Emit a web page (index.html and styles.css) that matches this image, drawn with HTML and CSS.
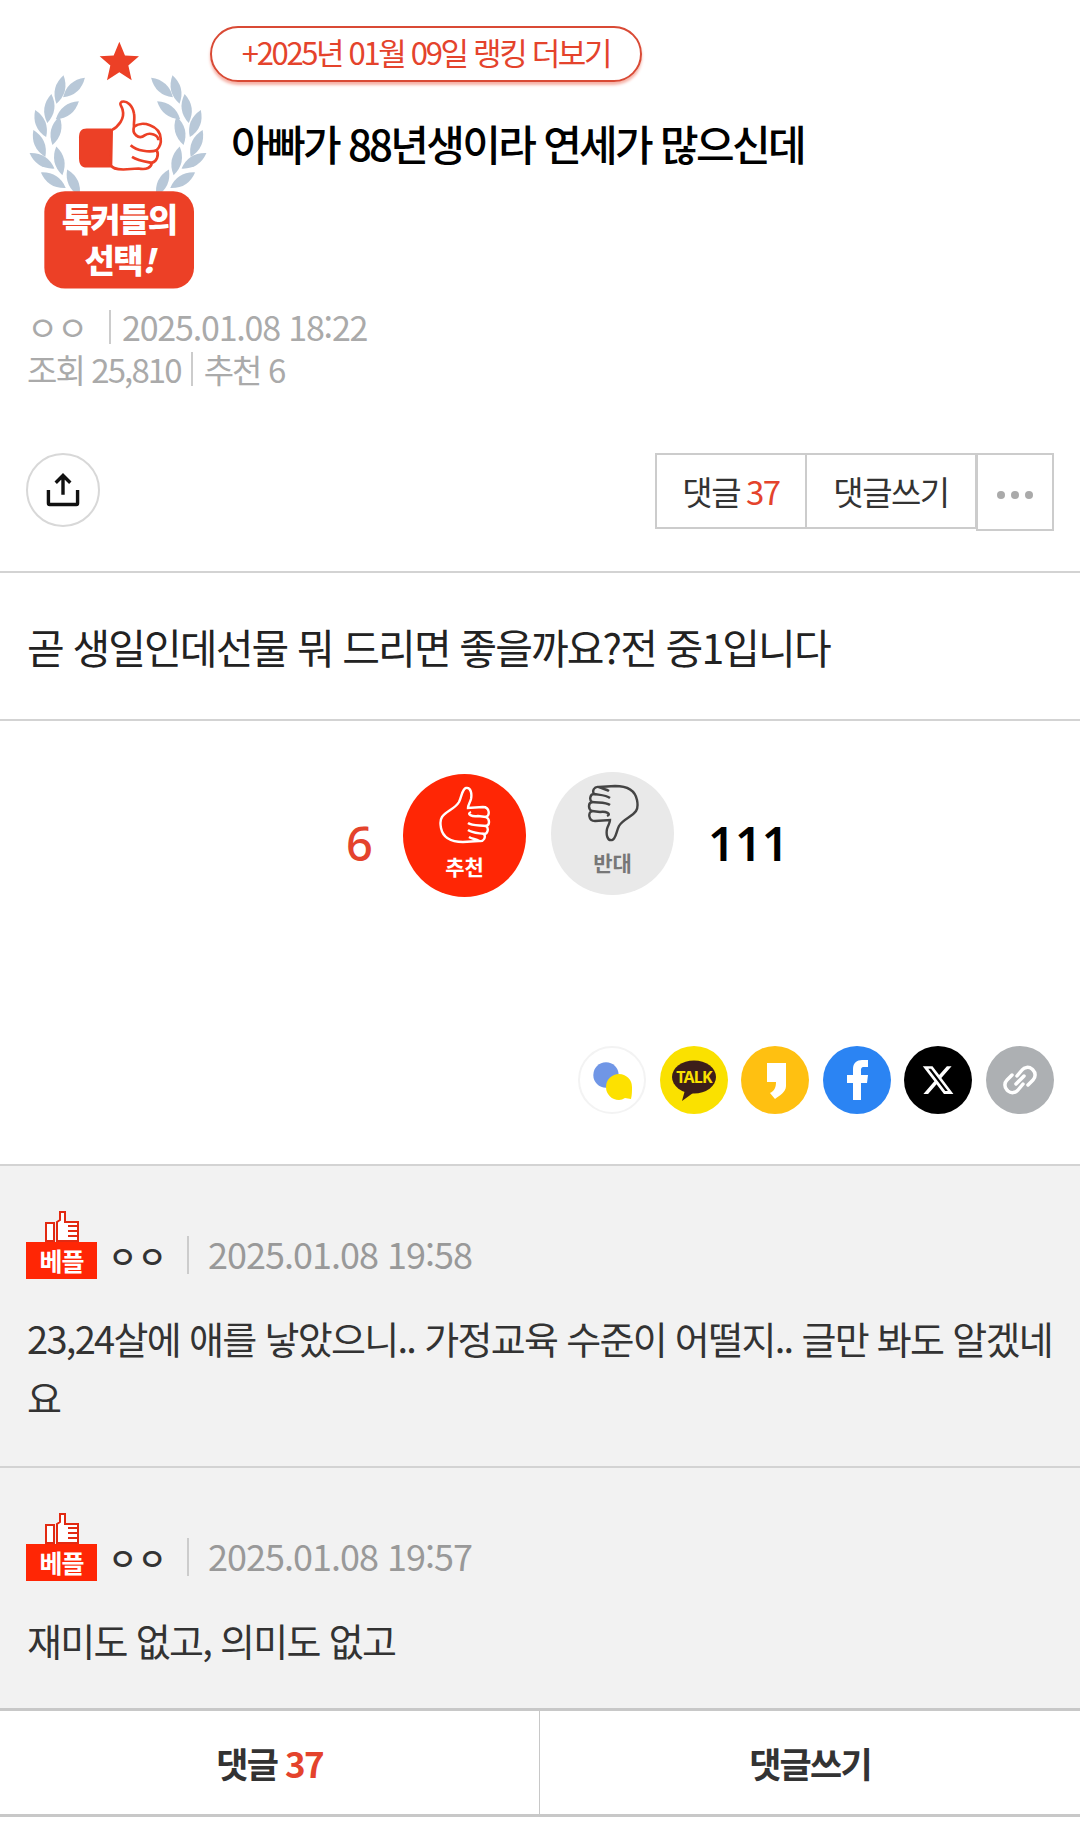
FILE: index.html
```html
<!DOCTYPE html>
<html lang="ko">
<head>
<meta charset="utf-8">
<title>판</title>
<link rel="stylesheet" href="styles.css">
</head>
<body>
  <svg class="defs" width="0" height="0">
    <defs>
      <path id="hand" d="M4 31C8 25 17 23 21 16C24 10 24 3 28 2C33 1 34 8 33 13C32 17 30 19 30 22L45 21C52 21 52 30 48 31C52 33 52 39 48 40C51 42 50 48 46 48C48 51 46 56 41 55L25 56C14 56 5 52 3 42C2 37 2 34 4 31Z"/>
      <path id="fingers" d="M33 26C28 28 34 31 40 30L48 31M30 37C34 40 42 39 48 40M30 44C34 47 41 47 46 48M31 51C34 53 38 53 41 55"/>
      <path id="leaf" d="M0 -44Q30 0 0 44Q-30 0 0 -44Z"/>
      <g id="wreath">
        <use href="#leaf" transform="translate(192 172) rotate(48)"/>
        <use href="#leaf" transform="translate(150 178) rotate(14)"/>
        <use href="#leaf" transform="translate(172 240) rotate(52)"/>
        <use href="#leaf" transform="translate(118 235) rotate(8)"/>
        <use href="#leaf" transform="translate(138 302) rotate(14)"/>
        <use href="#leaf" transform="translate(92 280) rotate(-22)"/>
        <use href="#leaf" transform="translate(88 340) rotate(-24)"/>
        <use href="#leaf" transform="translate(148 392) rotate(-12)"/>
        <use href="#leaf" transform="translate(96 392) rotate(-58)"/>
        <use href="#leaf" transform="translate(130 450) rotate(-58)"/>
        <use href="#leaf" transform="translate(190 458) rotate(-25)"/>
      </g>
      <g id="best-thumb">
        <path d="M1 12H9V30H1ZM12 30V11L15 9V1H20V11H33V30Z" fill="#fff" stroke="#e22a12" stroke-width="2"/>
        <path d="M23 15H33M23 20H33M23 25H33" stroke="#e22a12" stroke-width="2"/>
      </g>
    </defs>
  </svg>

  <header class="head">
    <div class="medal">
      <svg viewBox="0 0 600 800" width="200" height="267">
        <polygon class="medal-red" points="328,35 345,76 387,78 355,106 365,150 328,126 291,150 301,106 269,78 311,76"/>
        <use href="#wreath" class="medal-leaf"/>
        <use href="#wreath" class="medal-leaf" transform="translate(648 0) scale(-1 1)"/>
        <rect class="medal-red" x="103" y="483" width="449" height="292" rx="62"/>
        <path class="medal-red" d="M230 295H304V412H230C214 412 207 402 207 384V322C207 304 214 295 230 295Z"/>
        <path class="medal-hand" d="M305 300C325 290 345 265 338 240C335 225 325 222 335 215C350 210 368 225 372 250C375 265 370 285 372 290C395 270 450 285 452 325C455 345 445 355 440 360C448 375 440 395 425 398C425 412 410 420 385 415L340 418C315 418 305 410 303 405Z"/>
        <path class="medal-lines" d="M372 290C365 310 385 330 405 315C420 305 445 315 445 330M362 345C380 362 420 368 440 360M366 380C385 392 410 395 425 398"/>
      </svg>
      <div class="medal-label">톡커들의<br>선택<em>!</em></div>
    </div>
    <div class="head-main">
      <a class="rank-pill">+2025년 01월 09일 랭킹 더보기</a>
      <h1 class="title">아빠가 88년생이라 연세가 많으신데</h1>
    </div>
  </header>

  <div class="meta">
    <div class="meta-row"><span class="meta-name">ㅇㅇ</span><i class="meta-bar"></i><span>2025.01.08 18:22</span></div>
    <div class="meta-row meta-row-count"><span>조회 25,810</span><i class="meta-bar"></i><span>추천 6</span></div>
  </div>

  <div class="tools">
    <button class="share-btn">
      <svg viewBox="2 2 28 28" width="34" height="34"><path d="M16 20V4M10 10l6-6 6 6M4 16v11a1 1 0 0 0 1 1h22a1 1 0 0 0 1-1V16"/></svg>
    </button>
    <div class="tool-group">
      <a class="tool tool-a">댓글 <em>37</em></a>
      <a class="tool tool-b">댓글쓰기</a>
      <a class="tool tool-more"><i></i><i></i><i></i></a>
    </div>
  </div>

  <div class="body-text">곧 생일인데선물 뭐 드리면 좋을까요?전 중1입니다</div>

  <div class="votes">
    <span class="vote-num vote-up">6</span>
    <div class="vote-btn vote-btn-up">
      <svg viewBox="0 0 54 58" width="54" height="58"><use href="#hand"/><use href="#fingers"/></svg>
      <span>추천</span>
    </div>
    <div class="vote-btn vote-btn-down">
      <svg viewBox="0 0 54 58" width="54" height="58"><g transform="rotate(180 27 29)"><use href="#hand"/><use href="#fingers"/></g></svg>
      <span>반대</span>
    </div>
    <span class="vote-num vote-down">111</span>
  </div>

  <div class="sns">
    <svg class="sns-ico" viewBox="0 0 68 68"><circle cx="34" cy="34" r="33" fill="#fff" stroke="#f3f3f3" stroke-width="2"/><circle cx="28" cy="29" r="12.7" fill="#7096e6"/><path d="M41 28a13 13 0 0 1 13 13c0 4 0 8-1 12l-6-1c-2 1-4 2-6 2a13 13 0 0 1 0-26z" fill="#fde100"/></svg>
    <svg class="sns-ico" viewBox="0 0 68 68"><circle cx="34" cy="34" r="34" fill="#fae100"/><ellipse cx="34" cy="31" rx="22" ry="16.500" fill="#3c1e1a"/><path d="M25 44l-3 11 11-8z" fill="#3c1e1a"/><text class="talk" x="34" y="37">TALK</text></svg>
    <svg class="sns-ico" viewBox="0 0 68 68"><circle cx="34" cy="34" r="34" fill="#ffc011"/><path d="M26 17H45V40C45 46 38 50 34 53L29 47C33 45 35 42 35 36H26Z" fill="#fff"/></svg>
    <svg class="sns-ico" viewBox="0 0 68 68"><circle cx="34" cy="34" r="34" fill="#2b84f3"/><path d="M30 54V37H24V29H30V23C30 17 34 14 39 14H45V21H41C38 21 38 23 38 25V29H45L44 37H38V54Z" fill="#fff"/></svg>
    <svg class="sns-ico" viewBox="0 0 68 68"><circle cx="34" cy="34" r="34" fill="#000"/><path transform="translate(17 17) scale(1.42)" d="M18.244 2.25h3.308l-7.227 8.26 8.502 11.24H16.17l-5.214-6.817L4.990 21.750H1.680l7.730-8.835L1.254 2.250H8.080l4.713 6.231zm-1.161 17.520h1.833L7.084 4.126H5.117z" fill="#fff"/></svg>
    <svg class="sns-ico" viewBox="0 0 68 68"><circle cx="34" cy="34" r="34" fill="#adb0b3"/><g fill="none" stroke="#fff" stroke-width="3.500" stroke-linecap="round"><path d="M31 30l5-6a7 7 0 0 1 10-1l1 1a7 7 0 0 1 0 10l-5 5"/><path d="M37 38l-5 6a7 7 0 0 1-10 1l-1-1a7 7 0 0 1 0-10l5-5"/><path d="M30 38l8-8"/></g></svg>
  </div>

  <section class="comments">
    <article class="comment">
      <div class="comment-head">
        <div class="best">
          <svg viewBox="0 0 34 31" width="34" height="31"><use href="#best-thumb"/></svg>
          <span>베플</span>
        </div>
        <span class="comment-name">ㅇㅇ</span>
        <i class="comment-bar"></i>
        <span class="comment-date">2025.01.08 19:58</span>
      </div>
      <p class="comment-text">23,24살에 애를 낳았으니.. 가정교육 수준이 어떨지.. 글만 봐도 알겠네요</p>
    </article>
    <article class="comment comment-last">
      <div class="comment-head">
        <div class="best">
          <svg viewBox="0 0 34 31" width="34" height="31"><use href="#best-thumb"/></svg>
          <span>베플</span>
        </div>
        <span class="comment-name">ㅇㅇ</span>
        <i class="comment-bar"></i>
        <span class="comment-date">2025.01.08 19:57</span>
      </div>
      <p class="comment-text">재미도 없고, 의미도 없고</p>
    </article>
  </section>

  <nav class="bottom">
    <a class="bottom-btn">댓글 <em>37</em></a>
    <a class="bottom-btn">댓글쓰기</a>
  </nav>
</body>
</html>
```
FILE: styles.css
```css
* {
  box-sizing: border-box;
}

html, body {
  margin: 0;
  padding: 0;
  background: #fff;
  font-family: "Noto Sans CJK KR", "Noto Sans", sans-serif;
  color: #222;
}

.defs {
  display: block;
  height: 0;
}

/* head */
.head {
  display: flex;
  height: 290px;
  padding: 26px 0 0 10px;
}

.medal {
  position: relative;
  width: 200px;
  height: 267px;
  margin-top: 4px;
  flex: none;
}

.medal svg {
  display: block;
}

.medal-red { fill: #ec4026; }
.medal-leaf { fill: #b8c8d8; }
.medal-hand { fill: #fff; stroke: #ec4026; stroke-width: 8; }
.medal-lines { fill: none; stroke: #ec4026; stroke-width: 8; }

.medal-label {
  position: absolute;
  left: 34px;
  top: 161px;
  width: 150px;
  height: 97px;
  padding-top: 7px;
  color: #fff;
  font-size: 33px;
  font-weight: 900;
  line-height: 41px;
  letter-spacing: -1.700px;
  text-align: center;
}

.medal-label em {
  font-style: italic;
}

.rank-pill {
  display: block;
  width: 432px;
  height: 56px;
  border: 2px solid #d94a35;
  border-radius: 28px;
  box-shadow: 0 3px 3px #f6b3a8;
  color: #e4432c;
  font-size: 31px;
  line-height: 48px;
  letter-spacing: -2.350px;
  text-align: center;
}

.title {
  margin: 32px 0 0 21px;
  color: #000;
  font-size: 42px;
  font-weight: 500;
  line-height: 58px;
  letter-spacing: -2.7px;
  white-space: nowrap;
}

/* meta */
.meta {
  padding: 16px 0 0 27px;
  color: #aaa;
  font-size: 34px;
  letter-spacing: -1.2px;
}

.meta-row {
  display: flex;
  align-items: center;
  height: 42px;
  line-height: 42px;
}

.meta-name {
  width: 82px;
}

.meta-bar {
  width: 2px;
  height: 34px;
  margin-right: 11px;
  background: #ccc;
}

.meta-row-count {
  font-size: 33px;
  letter-spacing: -1.900px;
}

.meta-row-count span:first-child {
  margin-right: 10px;
}

/* tools */
.tools {
  display: flex;
  justify-content: space-between;
  align-items: flex-start;
  height: 120px;
  margin-top: 63px;
  padding: 0 26px;
  border-bottom: 2px solid #d3d3d3;
}

.share-btn {
  display: flex;
  align-items: center;
  justify-content: center;
  width: 74px;
  height: 74px;
  padding: 0;
  background: #fff;
  border: 2px solid #d8d8d8;
  border-radius: 50%;
}

.share-btn svg {
  fill: none;
  stroke: #111;
  stroke-width: 2.800;
}

.tool-group {
  display: flex;
  align-items: flex-start;
}

.tool {
  display: flex;
  align-items: center;
  justify-content: center;
  height: 76px;
  border: 2px solid #ccc;
  border-left: 0;
  font-size: 33px;
  letter-spacing: -1.5px;
  color: #333;
}

.tool em, .bottom-btn em {
  font-style: normal;
  color: #e4432c;
  margin-left: 6px;
}

.tool-a {
  width: 152px;
  border-left: 2px solid #ccc;
}

.tool-b {
  width: 170px;
}

.tool-more {
  width: 78px;
  height: 78px;
  gap: 6px;
  padding-top: 5px;
  border-left: 2px solid #ccc;
  margin-left: -1px;
}

.tool-more i {
  width: 8px;
  height: 8px;
  border-radius: 50%;
  background: #aaa;
}

/* body */
.body-text {
  height: 148px;
  padding: 0 0 0 27px;
  border-bottom: 2px solid #d3d3d3;
  color: #222;
  font-size: 41px;
  line-height: 146px;
  letter-spacing: -1.900px;
}

/* votes */
.votes {
  display: flex;
  align-items: center;
  height: 228px;
  padding: 0 0 0 346px;
}

.vote-num {
  padding-top: 16px;
  font-family: "Noto Sans", sans-serif;
  font-size: 47px;
}

.vote-up {
  width: 57px;
  color: #e4432c;
  font-weight: 500;
}

.vote-down {
  margin-left: 34px;
  color: #000;
  font-weight: 600;
}

.vote-btn {
  display: flex;
  flex-direction: column;
  align-items: center;
  width: 123px;
  height: 123px;
  padding-top: 12px;
  border-radius: 50%;
  font-size: 21px;
  font-weight: 700;
  line-height: 26px;
}

.vote-btn svg {
  fill: none;
  stroke-width: 2.4;
}

.vote-btn-up {
  background: #ff2605;
  color: #fff;
}

.vote-btn-up svg {
  stroke: #fff;
}

.vote-btn-up span {
  margin-top: 9px;
}

.vote-btn-down {
  margin-left: 25px;
  margin-bottom: 3px;
  background: #e9e9e9;
  color: #777;
}

.vote-btn-down svg {
  stroke: #444;
}

.vote-btn-down span {
  margin-top: 7px;
}

/* sns */
.sns {
  display: flex;
  justify-content: flex-end;
  gap: 13.600px;
  height: 118px;
  padding: 0 26px 0 0;
  margin-top: 97px;
}

.sns-ico {
  width: 68px;
  height: 68px;
}

.talk {
  fill: #fae100;
  font-family: "Noto Sans", sans-serif;
  font-size: 16px;
  font-weight: 700;
  letter-spacing: -.8px;
  text-anchor: middle;
}

/* comments */
.comments {
  background: #f2f2f2;
  border-top: 2px solid #d3d3d3;
}

.comment {
  height: 302px;
  padding: 45px 27px 0;
  border-bottom: 2px solid #d3d3d3;
}

.comment-last {
  height: 240px;
  border-bottom: 0;
}

.comment-head {
  display: flex;
  align-items: flex-end;
  height: 68px;
}

.best {
  display: flex;
  flex-direction: column;
  align-items: center;
  width: 71px;
  margin-left: -1px;
}

.best svg {
  display: block;
}

.best span {
  display: block;
  width: 71px;
  height: 37px;
  background: #ff2605;
  color: #fff;
  font-size: 25px;
  font-weight: 700;
  line-height: 36px;
  text-align: center;
  letter-spacing: -1px;
}

.comment-name {
  width: 79px;
  margin-left: 11px;
  font-size: 32px;
  font-weight: 500;
  line-height: 48px;
  color: #333;
}

.comment-bar {
  width: 2px;
  height: 38px;
  margin-bottom: 5px;
  background: #ccc;
}

.comment-date {
  margin-left: 19px;
  color: #999;
  font-size: 36px;
  line-height: 52px;
  letter-spacing: -1px;
}

.comment-text {
  margin: 0;
  padding-top: 29px;
  color: #333;
  font-size: 38px;
  line-height: 59px;
  letter-spacing: -1.700px;
}

/* bottom */
.bottom {
  display: flex;
  height: 109px;
  background: #fff;
  border-top: 3px solid #c8c8c8;
  border-bottom: 3px solid #c8c8c8;
}

.bottom-btn {
  display: flex;
  align-items: center;
  justify-content: center;
  width: 50%;
  font-size: 35px;
  font-weight: 700;
  letter-spacing: -1.800px;
  color: #333;
}

.bottom-btn:first-child {
  border-right: 1px solid #c8c8c8;
}

.bottom-btn em {
  margin-left: 8px;
}
```
